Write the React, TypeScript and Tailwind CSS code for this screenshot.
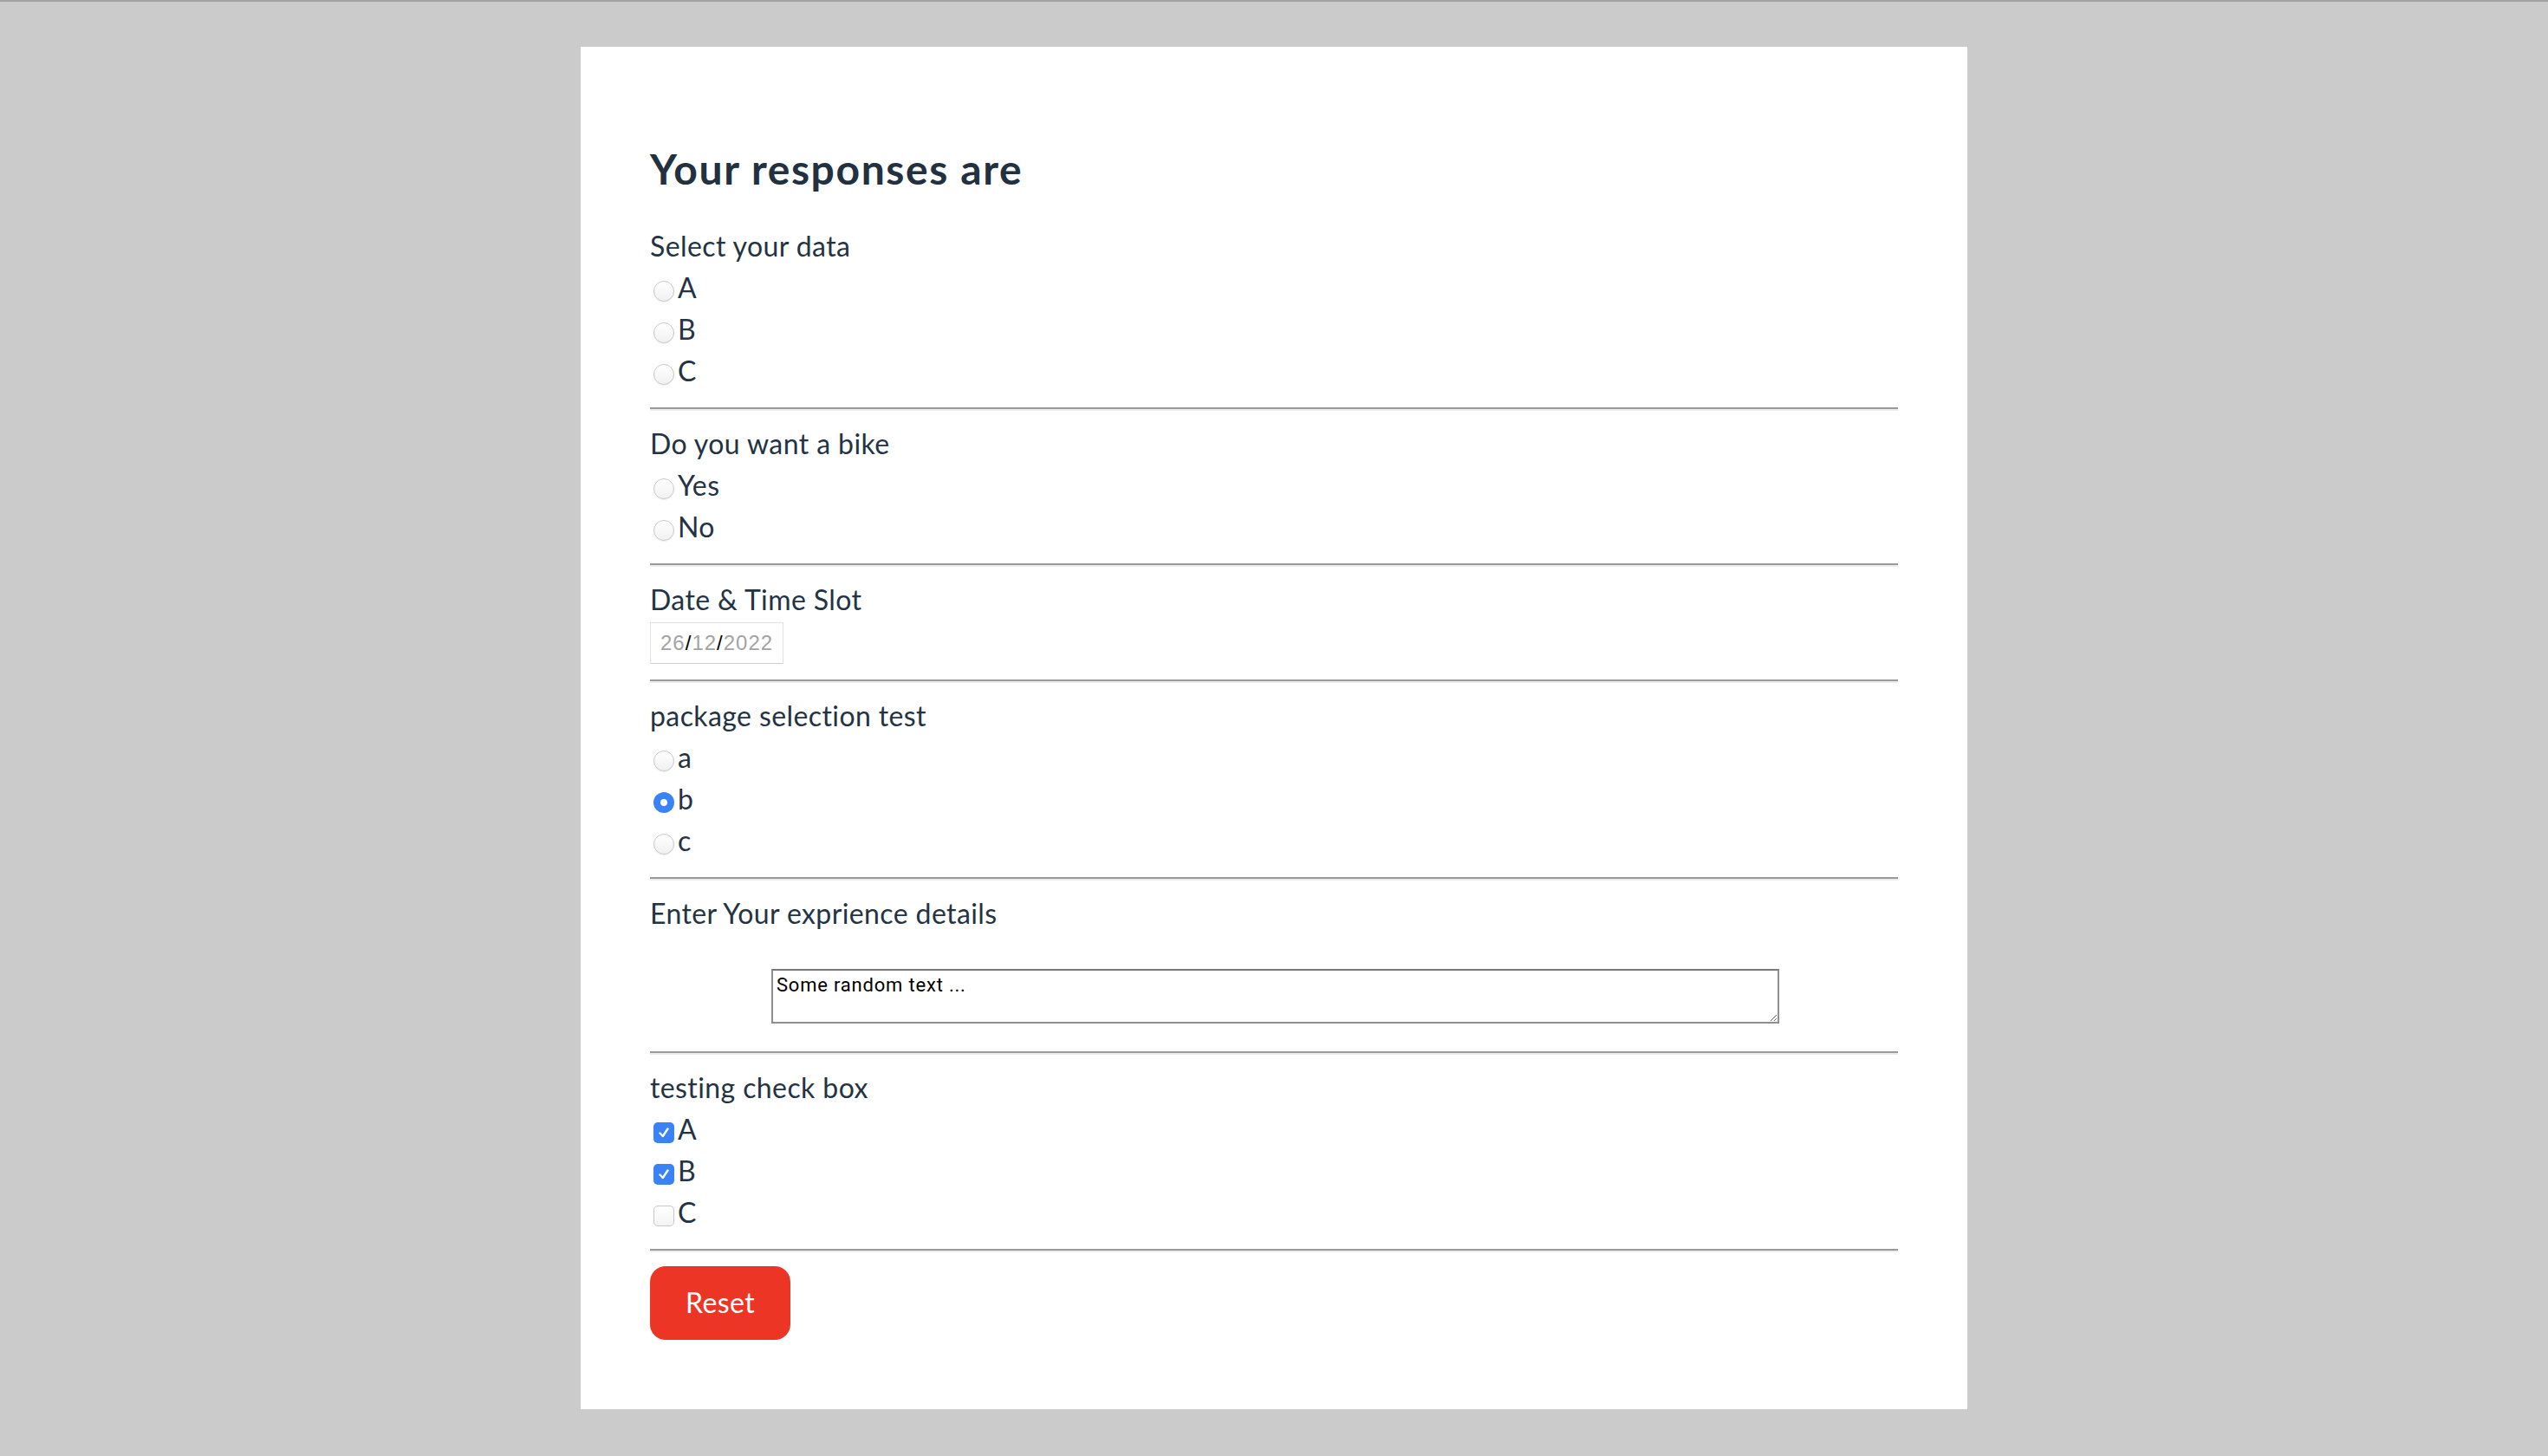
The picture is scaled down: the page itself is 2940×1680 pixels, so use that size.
import React from "react";

const Radio = ({ checked }: { checked?: boolean }) =>
  checked ? (
    <span className="ml-1 mr-1 mt-2 flex h-6 w-6 shrink-0 items-center justify-center rounded-full bg-[#3a82f7]">
      <span className="h-2 w-2 rounded-full bg-white" />
    </span>
  ) : (
    <span className="ml-1 mr-1 mt-2 h-6 w-6 shrink-0 rounded-full border border-[#c8c8c8] bg-linear-to-b from-white to-[#f1f1f1] shadow-[0_1px_0_rgba(0,0,0,0.06)]" />
  );

const Check = ({ checked }: { checked?: boolean }) =>
  checked ? (
    <span className="ml-1 mr-1 mt-2 flex h-6 w-6 shrink-0 items-center justify-center rounded-[5px] bg-[#3a82f7]">
      <svg width="16" height="16" viewBox="0 0 16 16" fill="none">
        <path d="M3.5 8.5 L6.8 12 L12.5 3.5" stroke="white" strokeWidth="2.4" strokeLinecap="round" strokeLinejoin="round" />
      </svg>
    </span>
  ) : (
    <span className="ml-1 mr-1 mt-2 h-6 w-6 shrink-0 rounded-[5px] border border-[#c8c8c8] bg-linear-to-b from-white to-[#f4f4f4]" />
  );

const Row = ({ children, label }: { children: React.ReactNode; label: string }) => (
  <div className="flex h-12 items-center">
    {children}
    <span>{label}</span>
  </div>
);

const Hr = () => (
  <div className="mt-[18px] mb-[14px] h-1 border-t-2 border-b-2 border-t-[#9a9a9a] border-b-[#ececec]" />
);

const Label = ({ children }: { children: React.ReactNode }) => <div className="h-12 leading-[48px]">{children}</div>;

export default function App() {
  return (
    <div className="min-h-screen border-t-2 border-[#a2a2a2] bg-[#cbcbcb] pt-[52px] pb-[54px]">
      <div
        className="mx-auto w-[1600px] bg-white px-20 pt-20 pb-20 text-[32px] tracking-[0.4px] text-[#243344]"
        style={{ fontFamily: "Lato, 'Noto Sans', sans-serif" }}
      >
        <h2 className="mt-8 mb-[36px] text-[48px] font-bold leading-[1.2] tracking-[1.6px] text-[#22313f]">Your responses are</h2>

        <Label>Select your data</Label>
        <Row label="A"><Radio /></Row>
        <Row label="B"><Radio /></Row>
        <Row label="C"><Radio /></Row>
        <Hr />

        <Label>Do you want a bike</Label>
        <Row label="Yes"><Radio /></Row>
        <Row label="No"><Radio /></Row>
        <Hr />

        <Label>Date &amp; Time Slot</Label>
        <div
          className="mt-[2px] flex h-12 w-[154px] items-center border border-[#e2e2e2] border-b-[#cfcfcf] pl-[11px] text-[24px] tracking-[1px] text-[#a3a3a3]"
          style={{ fontFamily: "'Liberation Sans', Arial, sans-serif" }}
        >
          26<span className="text-black">/</span>12<span className="text-black">/</span>2022
        </div>
        <Hr />

        <Label>package selection test</Label>
        <Row label="a"><Radio /></Row>
        <Row label="b"><Radio checked /></Row>
        <Row label="c"><Radio /></Row>
        <Hr />

        <Label>Enter Your exprience details</Label>
        <div className="mt-10 flex justify-center">
          <textarea
            readOnly
            defaultValue="Some random text ..."
            className="ml-[3px] h-[63px] w-[1163px] border-2 border-[#8f8f8f] border-t-[#787878] px-1 pt-[4px] text-[22px] leading-[1.2] tracking-[0.8px] text-black outline-none"
            style={{ fontFamily: "Roboto, 'Liberation Sans', sans-serif", resize: "both" }}
          />
        </div>
        <div className="mt-[32px] mb-[14px] h-1 border-t-2 border-b-2 border-t-[#9a9a9a] border-b-[#ececec]" />

        <Label>testing check box</Label>
        <Row label="A"><Check checked /></Row>
        <Row label="B"><Check checked /></Row>
        <Row label="C"><Check /></Row>
        <div className="mt-[18px] h-1 border-t-2 border-b-2 border-t-[#9a9a9a] border-b-[#ececec]" />

        <button className="mt-4 flex h-[85px] w-[162px] items-center justify-center rounded-[18px] bg-[#ec3524] text-[32px] text-white">
          Reset
        </button>
      </div>
    </div>
  );
}
